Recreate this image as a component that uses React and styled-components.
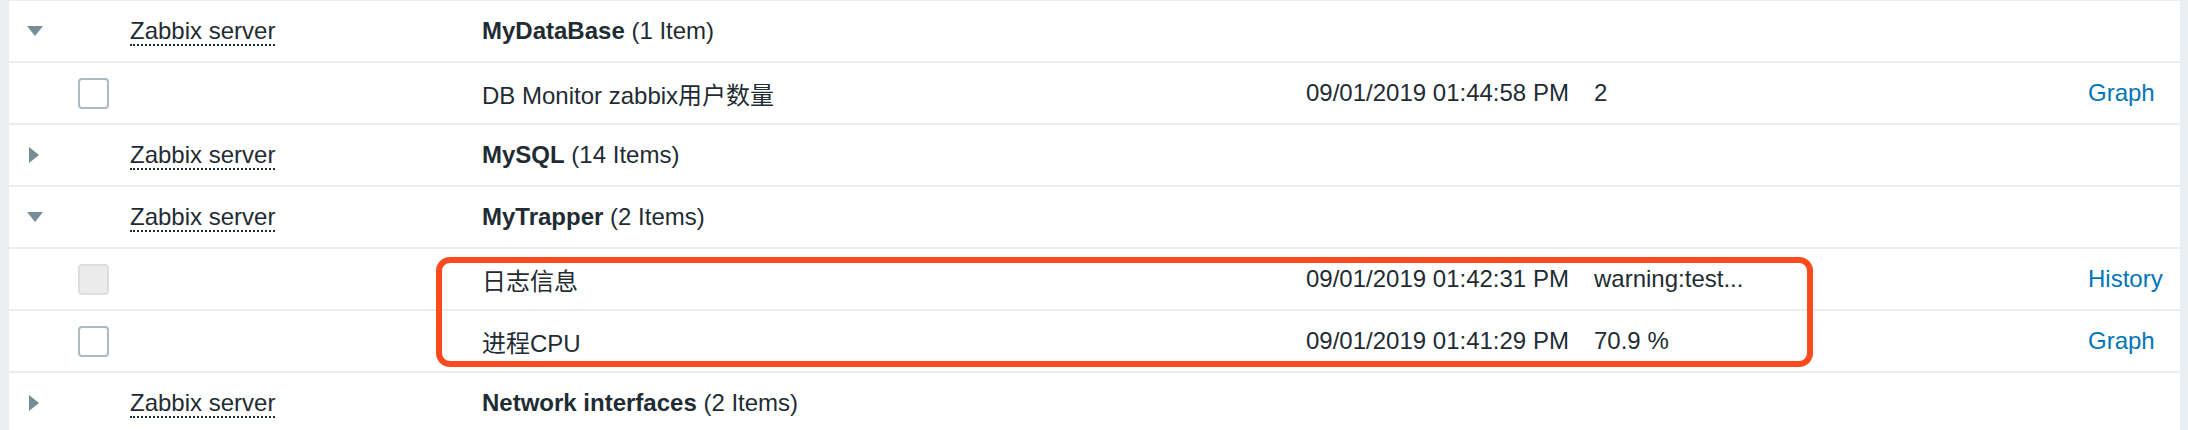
import React from 'react'
import styled, { createGlobalStyle } from 'styled-components'

const GlobalStyle = createGlobalStyle`
  html, body {
    margin: 0;
    overflow: hidden;
    background: #ebeef0;
  }
  body {
    font-family: "Liberation Sans", Arial, "Noto Sans CJK SC", sans-serif;
    font-size: 24px;
    color: #1f2c33;
  }
`

const rows = [
  { group: true, open: true, host: 'Zabbix server', name: 'MyDataBase', count: '(1 Item)' },
  { name: 'DB Monitor zabbix用户数量', clock: '09/01/2019 01:44:58 PM', value: '2', link: 'Graph' },
  { group: true, open: false, host: 'Zabbix server', name: 'MySQL', count: '(14 Items)' },
  { group: true, open: true, host: 'Zabbix server', name: 'MyTrapper', count: '(2 Items)' },
]

const marked = [
  { name: '日志信息', clock: '09/01/2019 01:42:31 PM', value: 'warning:test...', link: 'History', disabled: true },
  { name: '进程CPU', clock: '09/01/2019 01:41:29 PM', value: '70.9 %', link: 'Graph' },
]

const tail = [
  { group: true, open: false, host: 'Zabbix server', name: 'Network interfaces', count: '(2 Items)' },
]

function GroupRow({ row }) {
  return (
    <Row>
      <ToggleCell>
        <Arrow $open={row.open} />
      </ToggleCell>
      <Cell />
      <Cell>
        <Host>{row.host}</Host>
      </Cell>
      <NameCell>
        <b>{row.name}</b> {row.count}
      </NameCell>
    </Row>
  )
}

function ItemRow({ row }) {
  return (
    <Row>
      <Cell />
      <CheckCell>
        <Check $disabled={row.disabled} />
      </CheckCell>
      <Cell />
      <Cell>{row.name}</Cell>
      <Cell>{row.clock}</Cell>
      <Cell>{row.value}</Cell>
      <Cell>
        <Link>{row.link}</Link>
      </Cell>
    </Row>
  )
}

function renderRow(row, i) {
  return row.group ? <GroupRow key={i} row={row} /> : <ItemRow key={i} row={row} />
}

export default function App() {
  return (
    <>
      <GlobalStyle />
      <Card>
        {rows.map(renderRow)}
        <Highlight>
          {marked.map(renderRow)}
          <Marker />
        </Highlight>
        {tail.map(renderRow)}
      </Card>
    </>
  )
}

const Card = styled.div`
  margin: 1px 8px 0 9px;
  background: #fff;
`

const Row = styled.div`
  display: grid;
  grid-template-columns: 52px 69px 352px 824px 288px 1fr 92px;
  align-items: center;
  height: 60px;
  border-bottom: 2px solid #ebeef0;
  white-space: nowrap;
`

const Cell = styled.div`
  min-width: 0;
`

const ToggleCell = styled.div`
  display: flex;
  justify-content: center;
  align-items: center;
`

const CheckCell = styled.div`
  padding-left: 17px;
  display: flex;
  align-items: center;
`

const NameCell = styled.div`
  grid-column: 4 / -1;

  b {
    font-weight: bold;
  }
`

const Arrow = styled.span`
  width: 0;
  height: 0;
  ${p => p.$open
    ? `border-left: 8px solid transparent;
       border-right: 8px solid transparent;
       border-top: 10px solid #768d99;`
    : `border-top: 8px solid transparent;
       border-bottom: 8px solid transparent;
       border-left: 10px solid #768d99;
       margin-left: -2px;`}
`

const Check = styled.span`
  display: block;
  width: 27px;
  height: 27px;
  border: 2px solid ${p => (p.$disabled ? '#dcdfe1' : '#acbbc2')};
  border-radius: 4px;
  background: ${p => (p.$disabled ? '#ebebeb' : '#fff')};
`

const Host = styled.span`
  border-bottom: 2px dotted #1f2c33;
`

const Link = styled.span`
  color: #0275b8;
`

const Highlight = styled.div`
  position: relative;
`

const Marker = styled.div`
  position: absolute;
  top: 8px;
  bottom: 6px;
  left: 427px;
  right: 367px;
  border: 6px solid #fc4a1f;
  border-radius: 14px;
  pointer-events: none;
`
